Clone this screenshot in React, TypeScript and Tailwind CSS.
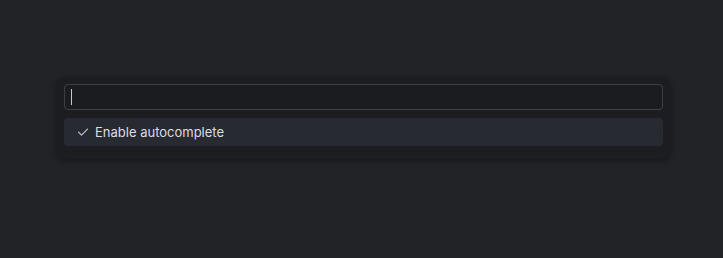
import React from "react";

export default function App() {
  return (
    <div className="min-h-[258px] w-full bg-[#222327] pt-[77px] pl-[4px] flex justify-center" style={{ fontFamily: "Inter, 'Noto Sans', sans-serif" }}>
      <div className="w-[615px] h-[82px] rounded-[9px] bg-[#1c1d21] shadow-[0_2px_6px_rgba(0,0,0,0.35)] px-2 pt-[7px] flex flex-col gap-2">
        <div className="h-[26px] rounded-[4px] border border-[#3e3f46] bg-[#1b1c20] flex items-center pl-[6px]">
          <div className="w-px h-[16px] bg-[#c8c8cc]" />
        </div>
        <div className="h-[28px] rounded-[4px] bg-[#282a32] flex items-center pl-[13px] gap-[6px]">
          <svg width="12" height="12" viewBox="0 0 12 12" fill="none" stroke="#c2c3c9" strokeWidth="1.2" strokeLinecap="round" strokeLinejoin="round">
            <path d="M1.5 6.2 L4.5 9.2 L10.5 3.2" />
          </svg>
          <span className="text-[13px] text-[#dcdde2] leading-none">Enable autocomplete</span>
        </div>
      </div>
    </div>
  );
}
